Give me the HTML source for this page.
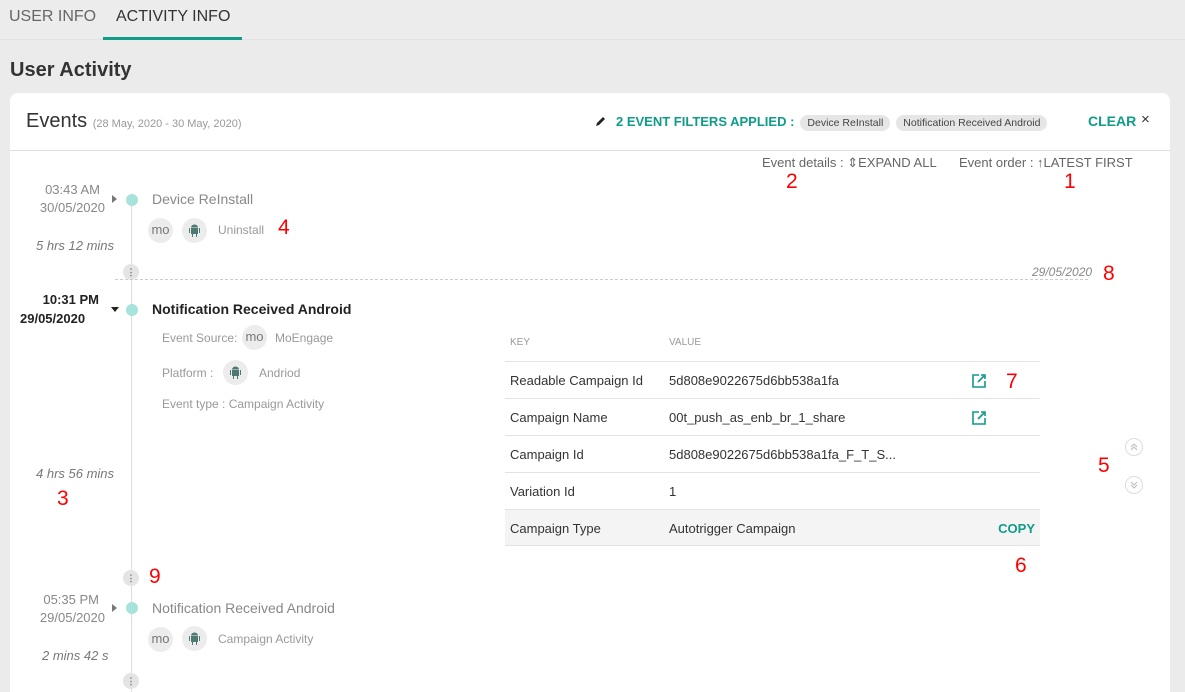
<!DOCTYPE html>
<html><head><meta charset="utf-8"><style>
*{box-sizing:border-box;margin:0;padding:0}
html,body{width:1185px;height:692px;overflow:hidden}
body{background:#ebebeb;font-family:"Liberation Sans",sans-serif;position:relative;color:#333}
.a{position:absolute;white-space:nowrap}
.tabs{position:absolute;left:0;top:0;width:1185px;height:40px;background:#ececec;border-bottom:1px solid #e2e2e2}
.card{position:absolute;left:10px;top:93px;width:1160px;height:599px;background:#fff;border-radius:8px 8px 0 0}
.red{color:#f00;font-size:21px}
.dot{position:absolute;width:12px;height:12px;border-radius:50%;background:#a8e2dc}
.more{position:absolute;width:16px;height:16px;border-radius:50%;background:#e4e4e4;color:#777;font-size:9px;text-align:center;line-height:16px;font-weight:bold}
.circ{position:absolute;width:25px;height:25px;border-radius:50%;background:#ececec;color:#777;font-size:13px;text-align:center;line-height:24px}
.tri-r{position:absolute;width:0;height:0;border-top:4px solid transparent;border-bottom:4px solid transparent;border-left:5px solid #777}
.tri-d{position:absolute;width:0;height:0;border-left:4px solid transparent;border-right:4px solid transparent;border-top:5px solid #222}
.g{color:#999;font-size:12px}
.row{position:absolute;left:505px;width:535px;height:37px;border-top:1px solid #e3e3e3;font-size:13px;color:#333;line-height:37px}
.row span{position:absolute}
.chip{display:inline-block;background:#e6e6e6;border-radius:10px;padding:0 7px;font-size:10.5px;color:#444;height:16px;line-height:16px;margin-left:6px}
</style></head><body>
<div class="tabs"></div>
<div class="a" style="left:9px;top:8px;font-size:16px;color:#666">USER INFO</div>
<div class="a" style="left:116px;top:8px;font-size:16px;color:#333">ACTIVITY INFO</div>
<div class="a" style="left:103px;top:37px;width:139px;height:3px;background:#0f9c88"></div>
<div class="a" style="left:10px;top:59px;font-size:20px;font-weight:bold;color:#333">User Activity</div>
<div class="card"></div>
<div class="a" style="left:26px;top:110px;font-size:20px;color:#333">Events <span style="font-size:11px;color:#999">(28 May, 2020 - 30 May, 2020)</span></div>
<div class="a" style="left:10px;top:150px;width:1160px;height:1px;background:#e0e0e0"></div>
<svg class="a" style="left:595px;top:115px" width="12" height="12" viewBox="0 0 12 12"><path d="M1 11l1-3 6-6 2 2-6 6z" fill="#222"/></svg>
<div class="a" style="left:616px;top:114px;font-size:13px;color:#0f9c88;font-weight:bold">2 EVENT FILTERS APPLIED :<span class="chip" style="font-weight:normal">Device ReInstall</span><span class="chip" style="font-weight:normal">Notification Received Android</span></div>
<div class="a" style="left:1088px;top:113px;font-size:14px;color:#0f9c88;font-weight:bold">CLEAR</div>
<div class="a" style="left:1141px;top:111px;font-size:15px;color:#333">×</div>
<div class="a" style="left:762px;top:155px;font-size:13px;color:#666">Event details : ⇕<span style="font-size:13px">EXPAND ALL</span></div>
<div class="a" style="left:959px;top:155px;font-size:13px;color:#666">Event order : ↑<span style="font-size:13px">LATEST FIRST</span></div>
<div class="a red" style="left:786px;top:170px">2</div>
<div class="a red" style="left:1064px;top:170px">1</div>

<div class="a" style="left:131px;top:200px;width:1px;height:492px;background:#ddd"></div>

<div class="a" style="left:20px;top:182px;font-size:13px;color:#888;text-align:right;width:80px">03:43 AM</div>
<div class="a" style="left:20px;top:200px;font-size:13px;color:#888;text-align:right;width:85px">30/05/2020</div>
<div class="tri-r" style="left:112px;top:195px"></div>
<div class="dot" style="left:126px;top:194px"></div>
<div class="a" style="left:152px;top:191px;font-size:14px;color:#888">Device ReInstall</div>
<div class="circ" style="left:148px;top:218px">mo</div>
<div class="circ" style="left:182px;top:218px"><svg width="13" height="15" viewBox="0 0 13 15" style="margin-top:5px"><path d="M3 5h7v6H9v3H8v-3H5v3H4v-3H3zM1 5h1v5H1zM11 5h1v5h-1zM3 4.5a3.5 3 0 017 0z" fill="#4f7873"/></svg></div>
<div class="a g" style="left:218px;top:223px">Uninstall</div>
<div class="a red" style="left:278px;top:216px">4</div>
<div class="a" style="left:36px;top:238px;font-size:13px;color:#777;font-style:italic">5 hrs 12 mins</div>
<div class="more" style="left:123px;top:264px">⋮</div>
<div class="a" style="left:115px;top:279px;width:973px;border-top:1px dashed #ccc"></div>
<div class="a" style="left:1032px;top:265px;font-size:12px;color:#888;font-style:italic">29/05/2020</div>
<div class="a red" style="left:1103px;top:262px">8</div>

<div class="a" style="left:20px;top:292px;font-size:13px;color:#222;font-weight:bold;width:79px;text-align:right">10:31 PM</div>
<div class="a" style="left:20px;top:311px;font-size:13px;color:#222;font-weight:bold">29/05/2020</div>
<div class="tri-d" style="left:111px;top:307px"></div>
<div class="dot" style="left:126px;top:304px"></div>
<div class="a" style="left:152px;top:301px;font-size:14px;color:#222;font-weight:bold">Notification Received Android</div>
<div class="a g" style="left:162px;top:331px">Event Source:</div>
<div class="circ" style="left:242px;top:325px">mo</div>
<div class="a g" style="left:275px;top:331px">MoEngage</div>
<div class="a g" style="left:162px;top:366px">Platform :</div>
<div class="circ" style="left:223px;top:360px"><svg width="13" height="15" viewBox="0 0 13 15" style="margin-top:5px"><path d="M3 5h7v6H9v3H8v-3H5v3H4v-3H3zM1 5h1v5H1zM11 5h1v5h-1zM3 4.5a3.5 3 0 017 0z" fill="#4f7873"/></svg></div>
<div class="a g" style="left:259px;top:366px">Andriod</div>
<div class="a g" style="left:162px;top:397px">Event type : Campaign Activity</div>
<div class="a" style="left:36px;top:466px;font-size:13px;color:#777;font-style:italic">4 hrs 56 mins</div>
<div class="a red" style="left:57px;top:487px">3</div>

<div class="a" style="left:510px;top:337px;font-size:10px;color:#999">KEY</div>
<div class="a" style="left:669px;top:337px;font-size:10px;color:#999">VALUE</div>
<div class="row" style="top:361px"><span style="left:5px">Readable Campaign Id</span><span style="left:164px">5d808e9022675d6bb538a1fa</span></div>
<div class="row" style="top:398px"><span style="left:5px">Campaign Name</span><span style="left:164px">00t_push_as_enb_br_1_share</span></div>
<div class="row" style="top:435px"><span style="left:5px">Campaign Id</span><span style="left:164px">5d808e9022675d6bb538a1fa_F_T_S...</span></div>
<div class="row" style="top:472px"><span style="left:5px">Variation Id</span><span style="left:164px">1</span></div>
<div class="row" style="top:509px;background:#f4f4f4;border-bottom:1px solid #e3e3e3"><span style="left:5px">Campaign Type</span><span style="left:164px">Autotrigger Campaign</span><span style="right:5px;color:#0f9c88;font-weight:bold">COPY</span></div>
<svg class="a" style="left:972px;top:374px" width="14" height="14" viewBox="0 0 14 14"><path d="M7 1H1v12h12V7M6 8l7-7M9 1h4v4" fill="none" stroke="#0f9c88" stroke-width="1.6"/></svg>
<svg class="a" style="left:972px;top:411px" width="14" height="14" viewBox="0 0 14 14"><path d="M7 1H1v12h12V7M6 8l7-7M9 1h4v4" fill="none" stroke="#0f9c88" stroke-width="1.6"/></svg>
<div class="a red" style="left:1006px;top:370px">7</div>
<div class="a red" style="left:1015px;top:554px">6</div>
<div class="a red" style="left:1098px;top:454px">5</div>
<svg class="a" style="left:1125px;top:438px" width="18" height="18" viewBox="0 0 18 18"><circle cx="9" cy="9" r="8.5" fill="none" stroke="#ddd"/><path d="M6 9l3-3 3 3M6 12l3-3 3 3" fill="none" stroke="#bbb"/></svg>
<svg class="a" style="left:1125px;top:476px" width="18" height="18" viewBox="0 0 18 18"><circle cx="9" cy="9" r="8.5" fill="none" stroke="#ddd"/><path d="M6 6l3 3 3-3M6 9l3 3 3-3" fill="none" stroke="#bbb"/></svg>

<div class="more" style="left:123px;top:570px">⋮</div>
<div class="a red" style="left:149px;top:565px">9</div>
<div class="a" style="left:20px;top:592px;font-size:13px;color:#888;width:79px;text-align:right">05:35 PM</div>
<div class="a" style="left:20px;top:610px;font-size:13px;color:#888;text-align:right;width:85px">29/05/2020</div>
<div class="tri-r" style="left:112px;top:604px"></div>
<div class="dot" style="left:126px;top:602px"></div>
<div class="a" style="left:152px;top:600px;font-size:14px;color:#888">Notification Received Android</div>
<div class="circ" style="left:148px;top:627px">mo</div>
<div class="circ" style="left:182px;top:626px"><svg width="13" height="15" viewBox="0 0 13 15" style="margin-top:5px"><path d="M3 5h7v6H9v3H8v-3H5v3H4v-3H3zM1 5h1v5H1zM11 5h1v5h-1zM3 4.5a3.5 3 0 017 0z" fill="#4f7873"/></svg></div>
<div class="a g" style="left:218px;top:632px">Campaign Activity</div>
<div class="a" style="left:42px;top:648px;font-size:13px;color:#777;font-style:italic">2 mins 42 s</div>
<div class="more" style="left:123px;top:673px">⋮</div>
</body></html>
